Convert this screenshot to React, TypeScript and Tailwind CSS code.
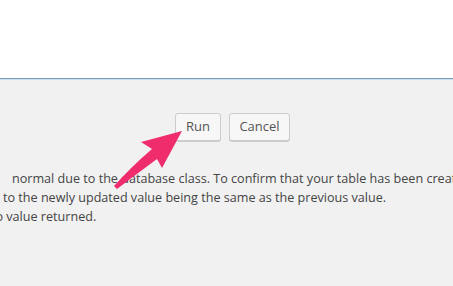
import React from "react";

const font = { fontFamily: "'Open Sans', 'Liberation Sans', sans-serif" };

export default function App() {
  return (
    <div className="relative w-[453px] h-[286px] overflow-hidden bg-[#f1f1f1]" style={font}>
      {/* top white area */}
      <div className="h-[78px] bg-white" />
      <div className="h-px bg-[#7b9ebf]" />
      <div className="h-px bg-[#c9dcec]" />

      {/* buttons */}
      <div className="flex gap-[8px] pl-[175px] pt-[33px]">
        <button className="h-[28px] w-[46px] rounded-[3px] border border-[#cccccc] bg-[#f7f7f7] text-[13px] text-[#555555] shadow-[0_1px_0_#cccccc]">
          Run
        </button>
        <button className="h-[28px] w-[61px] rounded-[3px] border border-[#cccccc] bg-[#f7f7f7] text-[13px] text-[#555555] shadow-[0_1px_0_#cccccc]">
          Cancel
        </button>
      </div>

      {/* message text */}
      <div className="pt-[28px] text-[12.6px] leading-[19px] text-[#444444] whitespace-nowrap">
        <p className="ml-[12px]">normal due to the database class. To confirm that your table has been created</p>
        <p className="ml-[3px]">to the newly updated value being the same as the previous value.</p>
        <p className="-ml-[14px]">No value returned.</p>
      </div>

      {/* pink arrow overlay */}
      <svg className="absolute left-0 top-0" width="453" height="286" viewBox="0 0 453 286">
        <path
          d="M182 131 L141 142 L152 149 Q132 166 114 186 L117 189 Q138 173 157 159 L162 168 Z"
          fill="#f02d6c"
        />
      </svg>
    </div>
  );
}
